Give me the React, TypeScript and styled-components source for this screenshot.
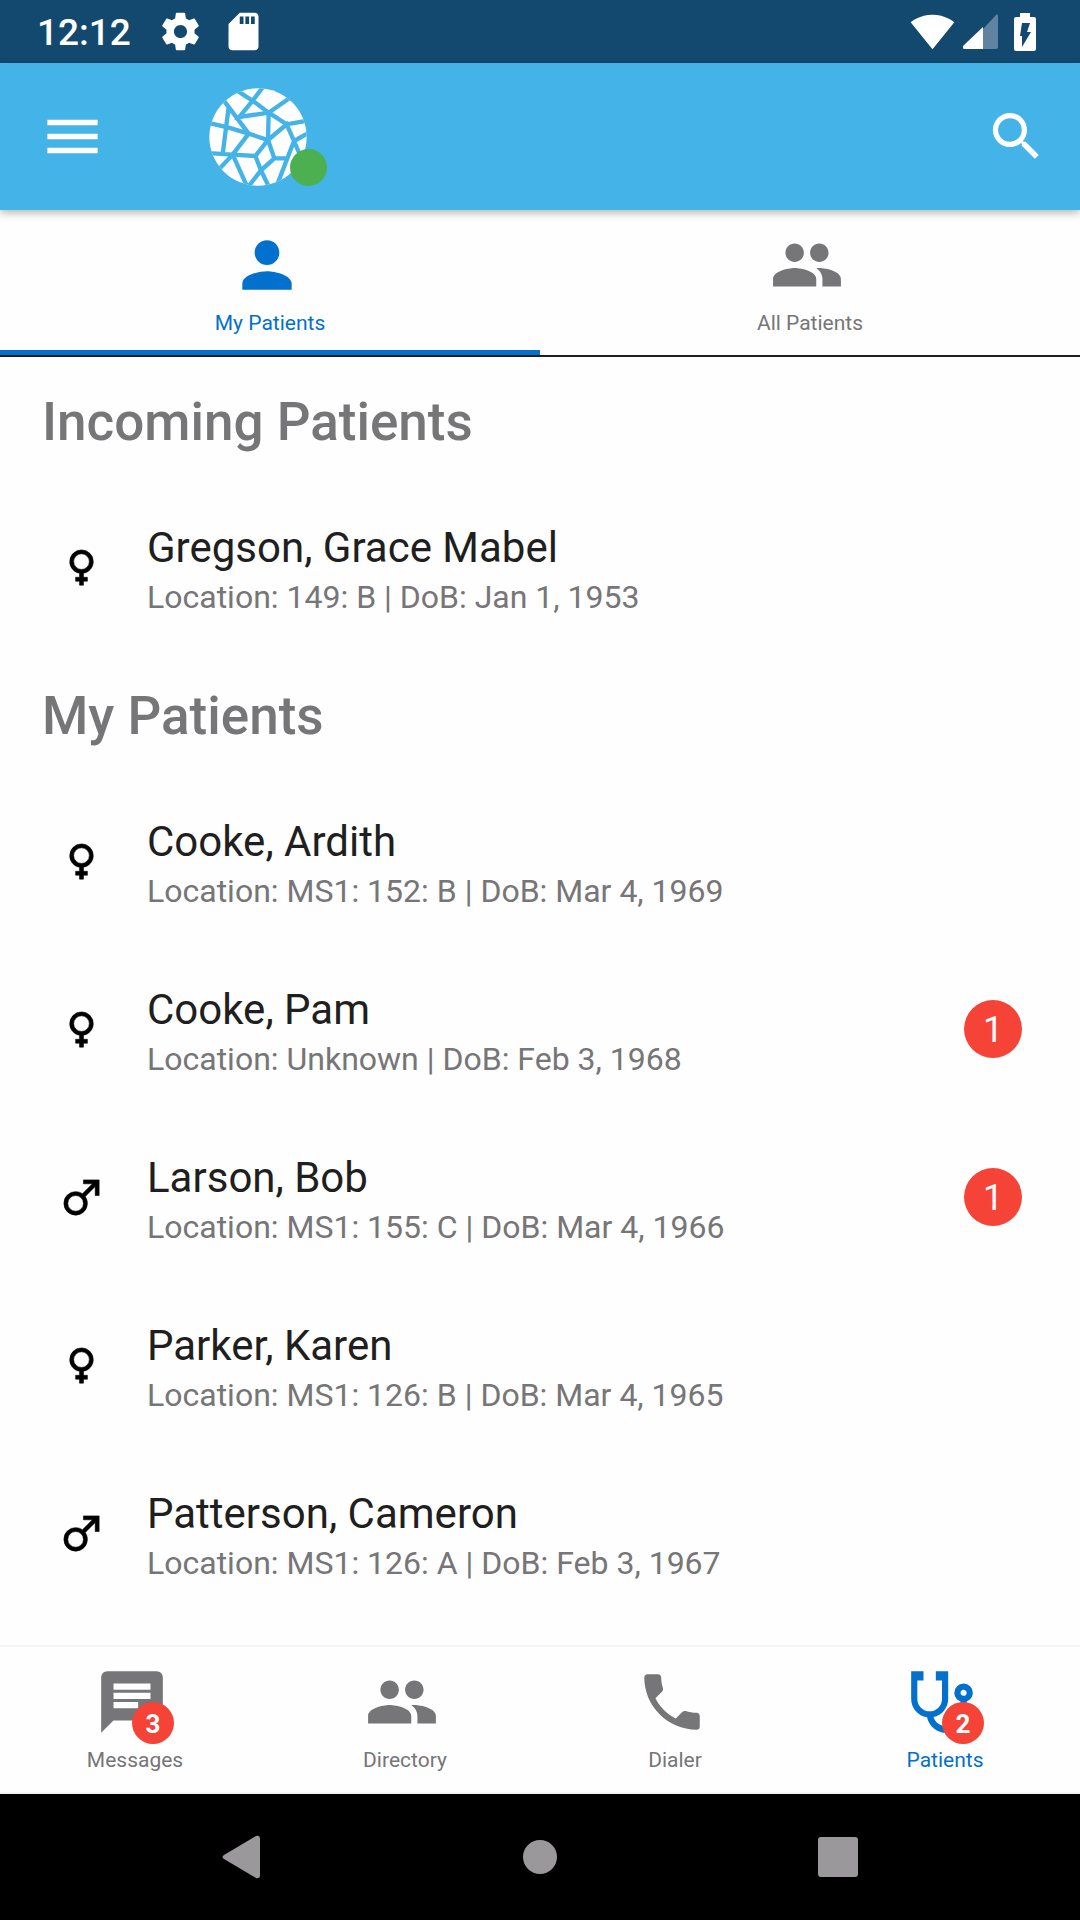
import React, { useState } from "react";
import styled, { createGlobalStyle } from "styled-components";

const color = {
  status: "#13496f",
  bar: "#44b3e7",
  accent: "#0271cd",
  muted: "#767577",
  ink: "#1f1e20",
  alert: "#f64337",
  online: "#4caf50",
  line: "#f5f4f8",
  page: "#fefefe",
};

const GlobalStyle = createGlobalStyle`
  *, *::before, *::after { box-sizing: border-box; }
  body {
    margin: 0;
    background: ${color.page};
    font-family: Roboto, "Liberation Sans", sans-serif;
  }
  button { font: inherit; color: inherit; background: none; border: 0; padding: 0; cursor: pointer; }
  a { color: inherit; text-decoration: none; }
  ul { list-style: none; margin: 0; padding: 0; }
  svg { display: block; }
`;

const Screen = styled.div`
  min-height: 100vh;
  display: flex;
  flex-direction: column;
`;

const StatusBar = styled.div`
  display: flex;
  align-items: center;
  justify-content: space-between;
  height: 63px;
  padding: 0 44px 0 37px;
  background: ${color.status};
  color: #fff;
`;

const StatusGroup = styled.div<{ $gap: number }>`
  display: flex;
  align-items: center;
  gap: ${(p) => p.$gap}px;
`;

const Clock = styled.time`
  font-size: 37px;
  font-weight: 500;
  line-height: 44px;
  margin-right: 9px;
  padding-top: 2px;
`;

const AppBar = styled.header`
  position: relative;
  display: flex;
  align-items: center;
  height: 147px;
  padding: 0 32px 0 39px;
  background: ${color.bar};
  color: #fff;
  box-shadow: 0 3px 8px rgba(0, 0, 0, 0.28);
`;

const Logo = styled.div`
  position: relative;
  margin-left: 103px;
  margin-right: auto;
`;

const OnlineDot = styled.span`
  position: absolute;
  right: -20px;
  bottom: 0;
  width: 37px;
  height: 37px;
  border-radius: 50%;
  background: ${color.online};
`;

const Tabs = styled.div`
  display: grid;
  grid-template-columns: 1fr 1fr;
  border-bottom: 2px solid ${color.ink};
`;

const Tab = styled.button<{ $active: boolean }>`
  display: flex;
  flex-direction: column;
  align-items: center;
  gap: 9px;
  padding: 18px 0 15px;
  border-bottom: 5px solid ${(p) => (p.$active ? color.accent : "transparent")};
  color: ${(p) => (p.$active ? color.accent : color.muted)};
`;

const IconSlot = styled.span`
  position: relative;
  display: block;
  margin-right: 6px;
`;

const Label = styled.span`
  font-size: 21px;
  line-height: 24px;
`;

const Content = styled.main`
  flex: 1;
  padding-bottom: 28px;
`;

const SectionTitle = styled.h2`
  margin: 0;
  padding: 34px 42px 30px;
  font-size: 53px;
  font-weight: 500;
  line-height: 62px;
  color: ${color.muted};
`;

const PatientLink = styled.a`
  display: flex;
  align-items: center;
  gap: 42px;
  height: 168px;
  padding: 0 58px;
`;

const PatientText = styled.div`
  flex: 1;
  padding-top: 6px;
`;

const PatientName = styled.div`
  font-size: 42px;
  line-height: 50px;
  color: ${color.ink};
`;

const PatientInfo = styled.div`
  margin-top: 4px;
  font-size: 32px;
  line-height: 40px;
  color: ${color.muted};
`;

const CountBadge = styled.span`
  display: grid;
  place-items: center;
  width: 58px;
  height: 58px;
  padding-top: 2px;
  border-radius: 50%;
  background: ${color.alert};
  color: #fff;
  font-size: 36px;
  line-height: 42px;
`;

const BottomNav = styled.nav`
  display: grid;
  grid-template-columns: repeat(4, 1fr);
  border-top: 2px solid ${color.line};
  border-bottom: 2px solid ${color.line};
`;

const NavItem = styled.a<{ $active: boolean }>`
  display: flex;
  flex-direction: column;
  align-items: center;
  gap: 9px;
  padding: 18px 0 20px;
  color: ${(p) => (p.$active ? color.accent : color.muted)};
`;

const NavBadge = styled.span`
  position: absolute;
  right: -5px;
  bottom: -5px;
  display: grid;
  place-items: center;
  width: 42px;
  height: 42px;
  padding-top: 1px;
  border-radius: 50%;
  background: ${color.alert};
  color: #fff;
  font-size: 26px;
  font-weight: 700;
  line-height: 30px;
`;

const SystemBar = styled.footer`
  display: flex;
  align-items: center;
  justify-content: center;
  gap: 254px;
  height: 126px;
  background: #000;
  color: #9a989b;
`;

const icons = {
  settings:
    "M19.43 12.98c.04-.32.07-.64.07-.98s-.03-.66-.07-.98l2.11-1.65c.19-.15.24-.42.12-.64l-2-3.46c-.12-.22-.39-.3-.61-.22l-2.49 1c-.52-.4-1.08-.73-1.69-.98l-.38-2.65C14.46 2.18 14.25 2 14 2h-4c-.25 0-.46.18-.49.42l-.38 2.65c-.61.25-1.17.59-1.69.98l-2.49-1c-.23-.09-.49 0-.61.22l-2 3.46c-.13.22-.07.49.12.64l2.11 1.65c-.04.32-.07.65-.07.98s.03.66.07.98l-2.11 1.65c-.19.15-.24.42-.12.64l2 3.46c.12.22.39.3.61.22l2.49-1c.52.4 1.08.73 1.69.98l.38 2.65c.03.24.24.42.49.42h4c.25 0 .46-.18.49-.42l.38-2.65c.61-.25 1.17-.59 1.69-.98l2.49 1c.23.09.49 0 .61-.22l2-3.46c.12-.22.07-.49-.12-.64l-2.11-1.65zM12 15.5c-1.93 0-3.5-1.57-3.5-3.5s1.57-3.5 3.5-3.5 3.5 1.57 3.5 3.5-1.57 3.5-3.5 3.5z",
  sdCard:
    "M18 2h-8L4.02 8 4 20c0 1.1.9 2 2 2h12c1.1 0 2-.9 2-2V4c0-1.1-.9-2-2-2zm-6 6h-2V4h2v4zm3 0h-2V4h2v4zm3 0h-2V4h2v4z",
  wifi:
    "M12.01 21.49L23.64 7c-.45-.34-4.93-4-11.64-4C5.28 3 .81 6.66.36 7l11.63 14.49.01.01.01-.01z",
  menu: "M3 18h18v-2H3v2zm0-5h18v-2H3v2zm0-7v2h18V6H3z",
  search:
    "M15.5 14h-.79l-.28-.27C15.41 12.59 16 11.11 16 9.5 16 5.91 13.09 3 9.5 3S3 5.91 3 9.5 5.91 16 9.5 16c1.61 0 3.09-.59 4.23-1.57l.27.28v.79l5 4.99L20.49 19l-4.99-5zm-6 0C7.01 14 5 11.99 5 9.5S7.01 5 9.5 5 14 7.01 14 9.5 11.99 14 9.5 14z",
  person:
    "M12 12c2.21 0 4-1.79 4-4s-1.79-4-4-4-4 1.79-4 4 1.79 4 4 4zm0 2c-2.67 0-8 1.34-8 4v2h16v-2c0-2.66-5.33-4-8-4z",
  people:
    "M16 11c1.66 0 2.99-1.34 2.99-3S17.66 5 16 5c-1.66 0-3 1.34-3 3s1.34 3 3 3zm-8 0c1.66 0 2.99-1.34 2.99-3S9.66 5 8 5C6.34 5 5 6.34 5 8s1.34 3 3 3zm0 2c-2.33 0-7 1.17-7 3.5V19h14v-2.5c0-2.33-4.67-3.5-7-3.5zm8 0c-.29 0-.62.02-.97.05 1.16.84 1.97 1.97 1.97 3.45V19h6v-2.5c0-2.33-4.67-3.5-7-3.5z",
  chat:
    "M20 2H4c-1.1 0-1.99.9-1.99 2L2 22l4-4h14c1.1 0 2-.9 2-2V4c0-1.1-.9-2-2-2zM6 9h12v2H6V9zm8 5H6v-2h8v2zm4-6H6V6h12v2z",
  phone:
    "M6.62 10.79c1.44 2.83 3.76 5.14 6.59 6.59l2.2-2.2c.27-.27.67-.36 1.02-.24 1.12.37 2.33.57 3.57.57.55 0 1 .45 1 1V20c0 .55-.45 1-1 1-9.39 0-17-7.61-17-17 0-.55.45-1 1-1h3.5c.55 0 1 .45 1 1 0 1.25.2 2.45.57 3.57.11.35.03.74-.25 1.02l-2.2 2.2z",
  stethoscope:
    "M19 8c.56 0 1 .43 1 1a1 1 0 0 1-1 1c-.57 0-1-.45-1-1s.43-1 1-1M2 2v9c0 2.96 2.19 5.5 5.14 5.91.62 3.01 3.28 5.09 6.36 5.09a6.5 6.5 0 0 0 6.5-6.5v-3.69c1.16-.42 2-1.52 2-2.81a3 3 0 0 0-3-3 3 3 0 0 0-3 3c0 1.29.84 2.4 2 2.81v3.6c0 2.5-2 4.5-4.5 4.5-2 0-3.68-1.21-4.28-3.01C12 16.3 14 13.8 14 11V2h-4v3h2v6a4 4 0 0 1-4 4 4 4 0 0 1-4-4V5h2V2H2z",
  female:
    "M12 3a6 6 0 0 1 6 6c0 2.97-2.16 5.44-5 5.92V17h2v2h-2v2h-2v-2H9v-2h2v-2.08C8.16 14.44 6 11.97 6 9a6 6 0 0 1 6-6m0 2a4 4 0 0 0-4 4 4 4 0 0 0 4 4 4 4 0 0 0 4-4 4 4 0 0 0-4-4z",
  male:
    "M9 9c1.29 0 2.5.41 3.47 1.11L17.58 5H13V3h8v8h-2V6.41l-5.11 5.09c.7 1 1.11 2.2 1.11 3.5a6 6 0 0 1-6 6 6 6 0 0 1-6-6 6 6 0 0 1 6-6m0 2a4 4 0 0 0-4 4 4 4 0 0 0 4 4 4 4 0 0 0 4-4 4 4 0 0 0-4-4z",
};

type IconName = keyof typeof icons;

function Icon({ name, size, fill = "currentColor" }: { name: IconName; size: number; fill?: string }) {
  return (
    <svg width={size} height={size} viewBox="0 0 24 24" fill={fill} aria-hidden="true">
      <path d={icons[name]} />
    </svg>
  );
}

/* Gender symbols carry a thin outline so that they read at list size. */
function GenderIcon({ sex }: { sex: "female" | "male" }) {
  return (
    <svg width="47" height="47" viewBox="0 0 24 24" fill="#000" stroke="#000" strokeWidth="0.3" role="img" aria-label={sex}>
      <path d={icons[sex]} />
    </svg>
  );
}

function SignalIcon() {
  return (
    <svg width="35" height="35" viewBox="0 0 35 35" aria-hidden="true">
      <path d="M20 15 33 1q2-2 2 1v31q0 2-2 2H20z" fill="#5f83a0" />
      <path d="M20 13v22H1q-2-1-1-3z" fill="#fff" />
    </svg>
  );
}

function BatteryIcon() {
  return (
    <svg width="22" height="38" viewBox="0 0 22 38" aria-hidden="true">
      <path d="M6 0h10v4h4q2 0 2 2v30q0 2-2 2H2q-2 0-2-2V6q0-2 2-2h4z" fill="#fff" />
      <path d="M8 10h8l-3 9h4L8 34V23H6z" fill={color.status} />
    </svg>
  );
}

function GlobeLogo() {
  return (
    <svg width="98" height="98" viewBox="59 55 294 294" role="img" aria-label="Home">
      <clipPath id="globe">
        <circle cx="206" cy="202" r="146" />
      </clipPath>
      <g clipPath="url(#globe)">
        <rect x="59" y="55" width="294" height="294" fill="#fff" />
        <path
          d="M138 60 190 93 238 129 292 164 360 152M224 48 190 93 150 142 238 129 314 76M103 92 178 192M118 112 100 254M50 158 118 174 178 192 236 211 238 129M236 211 292 164 314 214 338 270M314 214 360 188M314 214 264 344M178 192 130 255 84 304M50 250 130 255 198 259 236 211 255 266 215 302 176 352M255 266 292 266M130 255 174 352M198 259 215 302 240 354"
          fill="none"
          stroke={color.bar}
          strokeWidth="13"
        />
      </g>
    </svg>
  );
}

type Patient = { name: string; sex: "female" | "male"; location: string; dob: string; alerts?: number };

const sections: { title: string; patients: Patient[] }[] = [
  {
    title: "Incoming Patients",
    patients: [{ name: "Gregson, Grace Mabel", sex: "female", location: "149: B", dob: "Jan 1, 1953" }],
  },
  {
    title: "My Patients",
    patients: [
      { name: "Cooke, Ardith", sex: "female", location: "MS1: 152: B", dob: "Mar 4, 1969" },
      { name: "Cooke, Pam", sex: "female", location: "Unknown", dob: "Feb 3, 1968", alerts: 1 },
      { name: "Larson, Bob", sex: "male", location: "MS1: 155: C", dob: "Mar 4, 1966", alerts: 1 },
      { name: "Parker, Karen", sex: "female", location: "MS1: 126: B", dob: "Mar 4, 1965" },
      { name: "Patterson, Cameron", sex: "male", location: "MS1: 126: A", dob: "Feb 3, 1967" },
    ],
  },
];

const tabs: { label: string; icon: IconName }[] = [
  { label: "My Patients", icon: "person" },
  { label: "All Patients", icon: "people" },
];

const navItems: { label: string; icon: IconName; count?: number }[] = [
  { label: "Messages", icon: "chat", count: 3 },
  { label: "Directory", icon: "people" },
  { label: "Dialer", icon: "phone" },
  { label: "Patients", icon: "stethoscope", count: 2 },
];

function PatientRow({ patient }: { patient: Patient }) {
  return (
    <li>
      <PatientLink href="#patient">
        <GenderIcon sex={patient.sex} />
        <PatientText>
          <PatientName>{patient.name}</PatientName>
          <PatientInfo>{`Location: ${patient.location} | DoB: ${patient.dob}`}</PatientInfo>
        </PatientText>
        {patient.alerts && <CountBadge>{patient.alerts}</CountBadge>}
      </PatientLink>
    </li>
  );
}

export default function App() {
  const [tab, setTab] = useState(0);

  return (
    <Screen>
      <GlobalStyle />
      <StatusBar>
        <StatusGroup $gap={18}>
          <Clock>12:12</Clock>
          <Icon name="settings" size={45} />
          <Icon name="sdCard" size={45} />
        </StatusGroup>
        <StatusGroup $gap={8}>
          <Icon name="wifi" size={45} />
          <SignalIcon />
          <span />
          <BatteryIcon />
        </StatusGroup>
      </StatusBar>

      <AppBar>
        <button type="button" aria-label="Menu">
          <Icon name="menu" size={67} />
        </button>
        <Logo>
          <GlobeLogo />
          <OnlineDot />
        </Logo>
        <button type="button" aria-label="Search">
          <Icon name="search" size={63} />
        </button>
      </AppBar>

      <Tabs role="tablist">
        {tabs.map((t, i) => (
          <Tab
            key={t.label}
            type="button"
            role="tab"
            aria-selected={tab === i}
            $active={tab === i}
            onClick={() => setTab(i)}
          >
            <IconSlot>
              <Icon name={t.icon} size={74} />
            </IconSlot>
            <Label>{t.label}</Label>
          </Tab>
        ))}
      </Tabs>

      <Content>
        {sections.map((s) => (
          <section key={s.title}>
            <SectionTitle>{s.title}</SectionTitle>
            <ul>
              {s.patients.map((p) => (
                <PatientRow key={p.name} patient={p} />
              ))}
            </ul>
          </section>
        ))}
      </Content>

      <BottomNav>
        {navItems.map((n) => (
          <NavItem key={n.label} href={`#${n.label.toLowerCase()}`} $active={n.label === "Patients"}>
            <IconSlot>
              <Icon name={n.icon} size={74} />
              {n.count && <NavBadge>{n.count}</NavBadge>}
            </IconSlot>
            <Label>{n.label}</Label>
          </NavItem>
        ))}
      </BottomNav>

      <SystemBar>
        <button type="button" aria-label="Back">
          <svg width="44" height="44" viewBox="0 0 44 44" fill="currentColor">
            <path d="M4 20 36 1q4-1 4 3v36q0 4-4 3L4 24q-3-2 0-4z" />
          </svg>
        </button>
        <button type="button" aria-label="Home screen">
          <svg width="44" height="44" viewBox="0 0 44 44" fill="currentColor">
            <circle cx="22" cy="22" r="17" />
          </svg>
        </button>
        <button type="button" aria-label="Recent apps">
          <svg width="44" height="44" viewBox="0 0 44 44" fill="currentColor">
            <rect x="2" y="2" width="40" height="40" rx="3" />
          </svg>
        </button>
      </SystemBar>
    </Screen>
  );
}
